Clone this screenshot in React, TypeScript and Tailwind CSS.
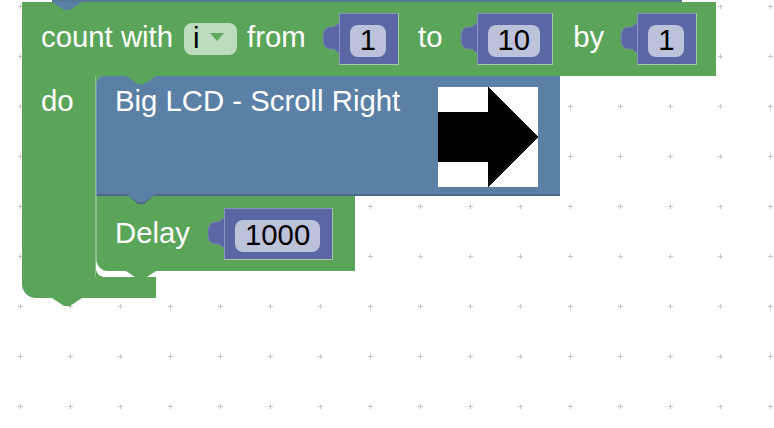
import React from "react";

function Notch({ color, dark }: { color: string; dark?: string }) {
  return (
    <svg width="30" height="10" viewBox="0 0 30 10" className="block">
      {dark ? <polygon points="0,0 12,10 18,10 30,0" fill={dark} /> : null}
      <polygon points="0,0 12,8 18,8 30,0" fill={color} />
    </svg>
  );
}

function ValueBlock({ value }: { value: string }) {
  return (
    <div className="flex items-start">
      <svg width="16" height="30" viewBox="0 0 16 30" className="mt-[10px] block overflow-visible">
        <path
          d="M16.5,0.5 C13,0.5 12.5,4 9.5,4 C4,4 0,5 0,15 C0,25 4,26 9.5,26 C12.5,26 13,29.5 16.5,29.5 Z"
          fill="#5b67a5"
          stroke="#7d86b8"
          strokeWidth="0.8"
        />
      </svg>
      <div className="flex h-[52px] items-start border border-t-[#8a92c2] border-l-[#8a92c2] border-r-[#a7c7a7] border-b-[#a7c7a7] bg-[#5b67a5] pt-[11px] pl-[10px] pr-[12px]">
        <div className="flex h-[32px] items-center rounded-[8px] bg-[#bdc2db] px-[10px] pb-[2px] leading-[30px] text-black">
          {value}
        </div>
      </div>
    </div>
  );
}

function Dropdown() {
  return (
    <div className="ml-[11px] flex h-[32px] w-[53px] items-center rounded-[8px] bg-[#bddbbd] pl-[9px]">
      <span className="pb-[2px] leading-[30px] text-black">i</span>
      <svg width="14" height="8" viewBox="0 0 14 8" className="mb-[5px] ml-[10px] block">
        <polygon points="0,0 14,0 7,8" fill="#62a862" />
      </svg>
    </div>
  );
}

function Grid() {
  const xs = Array.from({ length: 16 }, (_, i) => 20.5 + i * 50);
  const ys = Array.from({ length: 9 }, (_, i) => 6.5 + i * 50);
  let d = "";
  for (const y of ys) {
    for (const x of xs) {
      d += `M${x - 2.5} ${y}H${x + 2.5}M${x} ${y - 2.5}V${y + 2.5}`;
    }
  }
  return (
    <svg className="absolute inset-0" width="774" height="428" shapeRendering="crispEdges">
      <path d={d} stroke="#c6c6c6" strokeWidth="1" fill="none" />
    </svg>
  );
}

function LcdBlock() {
  return (
    <div className="bg-[#5ba55b]">
      <div className="relative flex h-[120px] w-[464px] items-start justify-between rounded-tl-[8px] border-b-2 border-l border-b-[#4b6a89] border-l-[#7e9bb8] bg-[#5b80a5] pl-[18px] pr-[22px]">
        <div className="mt-[9px] whitespace-nowrap leading-[32px]">Big LCD - Scroll Right</div>
        <div className="mt-[11px] h-[100px] w-[100px] bg-white">
          <svg width="100" height="100" viewBox="0 0 100 100" className="block" shapeRendering="crispEdges">
            <polygon points="0,25 50,25 50,0 100,50 50,100 50,75 0,75" fill="#000000" />
          </svg>
        </div>
        <div className="absolute left-[29px] top-full z-10">
          <Notch color="#5b80a5" dark="#4b6a89" />
        </div>
      </div>
    </div>
  );
}

function DelayBlock() {
  return (
    <div className="relative flex h-[75px] w-[259px] items-center rounded-bl-[12px] border-l border-l-[#8cc08c] bg-[#5ba55b] pl-[18px]">
      <span className="pb-[2px] leading-[32px]">Delay</span>
      <div className="ml-[18px] mt-[1px]">
        <ValueBlock value="1000" />
      </div>
      <div className="absolute left-[29px] top-full z-10">
        <Notch color="#5ba55b" />
      </div>
    </div>
  );
}

function LoopBlock() {
  return (
    <div className="relative flex flex-col">
      <div className="absolute left-[30px] top-0 z-10">
        <Notch color="#5b80a5" />
      </div>
      <div className="flex h-[74px] w-[694px] items-center bg-[#5ba55b] pl-[19px]">
        <span className="whitespace-nowrap pb-[4px] leading-[32px]">count with</span>
        <Dropdown />
        <span className="ml-[10px] pb-[4px] leading-[32px]">from</span>
        <div className="ml-[17px]">
          <ValueBlock value="1" />
        </div>
        <span className="ml-[19px] pb-[4px] leading-[32px]">to</span>
        <div className="ml-[18px]">
          <ValueBlock value="10" />
        </div>
        <span className="ml-[20px] pb-[4px] leading-[32px]">by</span>
        <div className="ml-[17px]">
          <ValueBlock value="1" />
        </div>
      </div>
      <div className="flex">
        <div className="w-[74px] border-r border-r-[#8cc08c] bg-[#5ba55b] pl-[19px]">
          <div className="mt-[9px] leading-[32px]">do</div>
        </div>
        <div className="relative flex flex-col">
          <div className="absolute left-[30px] top-0 z-10">
            <Notch color="#5ba55b" />
          </div>
          <LcdBlock />
          <DelayBlock />
          <div className="h-[6px] w-[8px] bg-[radial-gradient(circle_at_8px_-2px,transparent_7.5px,#5ba55b_8px)]" />
        </div>
      </div>
      <div className="relative h-[21px] w-[134px] rounded-bl-[14px] bg-[#5ba55b]">
        <div className="absolute left-[30px] top-full">
          <Notch color="#5ba55b" />
        </div>
      </div>
    </div>
  );
}

export default function App() {
  return (
    <div className="relative h-[428px] w-[774px] overflow-hidden bg-white font-['Liberation_Sans',Arial,sans-serif] text-[29.33px] text-white">
      <Grid />
      <div className="absolute left-[52px] top-0 h-[2px] w-[630px] bg-[#56789b]" />
      <div className="absolute left-[22px] top-[2px]">
        <LoopBlock />
      </div>
    </div>
  );
}
